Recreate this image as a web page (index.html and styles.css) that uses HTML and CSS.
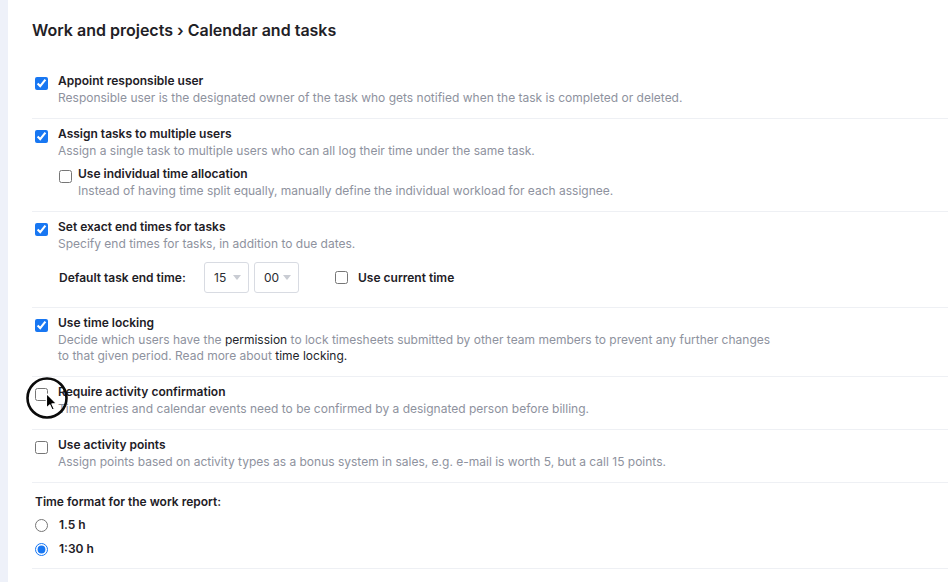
FILE: index.html
```html
<!DOCTYPE html>
<html lang="en">
<head>
<meta charset="utf-8">
<title>Calendar and tasks</title>
<link rel="stylesheet" href="styles.css">
</head>
<body>
<div class="layout">
  <aside class="rail"></aside>
  <main class="panel">
    <h1 class="crumb">Work and projects › Calendar and tasks</h1>

    <section class="row">
      <label class="opt">
        <input type="checkbox" checked>
        <span class="txt"><span class="ttl">Appoint responsible user</span>
        <span class="desc">Responsible user is the designated owner of the task who gets notified when the task is completed or deleted.</span></span>
      </label>
    </section>

    <section class="row">
      <label class="opt">
        <input type="checkbox" checked>
        <span class="txt"><span class="ttl">Assign tasks to multiple users</span>
        <span class="desc">Assign a single task to multiple users who can all log their time under the same task.</span></span>
      </label>
      <label class="opt sub">
        <input type="checkbox">
        <span class="txt"><span class="ttl">Use individual time allocation</span>
        <span class="desc">Instead of having time split equally, manually define the individual workload for each assignee.</span></span>
      </label>
    </section>

    <section class="row">
      <label class="opt">
        <input type="checkbox" checked>
        <span class="txt"><span class="ttl">Set exact end times for tasks</span>
        <span class="desc">Specify end times for tasks, in addition to due dates.</span></span>
      </label>
      <div class="timerow">
        <span class="tlabel">Default task end time:</span>
        <div class="selects">
          <div class="sel"><span>15</span><span class="caret"></span></div>
          <div class="sel"><span>00</span><span class="caret"></span></div>
        </div>
        <label class="inline">
          <input type="checkbox">
          <span class="ttl">Use current time</span>
        </label>
      </div>
    </section>

    <section class="row">
      <label class="opt">
        <input type="checkbox" checked>
        <span class="txt"><span class="ttl">Use time locking</span>
        <span class="desc narrow">Decide which users have the <a class="lnk">permission</a> to lock timesheets submitted by other team members to prevent any further changes to that given period. Read more about <a class="lnk">time locking.</a></span></span>
      </label>
    </section>

    <section class="row">
      <label class="opt">
        <input type="checkbox">
        <span class="txt"><span class="ttl">Require activity confirmation</span>
        <span class="desc">Time entries and calendar events need to be confirmed by a designated person before billing.</span></span>
      </label>
    </section>

    <section class="row">
      <label class="opt">
        <input type="checkbox">
        <span class="txt"><span class="ttl">Use activity points</span>
        <span class="desc">Assign points based on activity types as a bonus system in sales, e.g. e-mail is worth 5, but a call 15 points.</span></span>
      </label>
    </section>

    <section class="row fmt">
      <div class="ttl flabel">Time format for the work report:</div>
      <label class="radio"><input type="radio" name="fmt"><span class="ttl">1.5 h</span></label>
      <label class="radio"><input type="radio" name="fmt" checked><span class="ttl">1:30 h</span></label>
    </section>
  </main>
</div>

<svg class="cursor" width="48" height="48" viewBox="0 0 48 48" aria-hidden="true">
  <circle cx="23" cy="22" r="19.5" fill="none" stroke="#0a0a0a" stroke-width="2.6"/>
  <path d="M22.5 17.5 L22.5 32 L25.8 28.8 L28.2 34 L30.3 33 L27.9 27.9 L32.4 27.6 Z" fill="#000" stroke="#fff" stroke-width="1.1" stroke-linejoin="round"/>
</svg>
</body>
</html>
```

FILE: styles.css
```css
* { box-sizing: border-box; }
html, body { margin: 0; padding: 0; background: #fff; }
body {
  font-family: Inter, "Noto Sans", "Liberation Sans", sans-serif;
  font-size: 12px;
  color: #1e2026;
  -webkit-font-smoothing: antialiased;
}
.layout { display: flex; min-height: 582px; }
.rail { width: 8px; flex: none; background: #eef1f9; }
.panel { flex: 1; padding: 18px 0 0 24px; }

.crumb {
  margin: 0 0 24px 0;
  font-size: 16px;
  line-height: 24px;
  font-weight: 600;
  color: #1f2126;
}

.row {
  padding: 7px 0 12px 0;
  border-bottom: 1px solid #eef0f4;
}

.opt { display: flex; align-items: flex-start; cursor: pointer; }
.opt input[type=checkbox] {
  margin: 4px 10px 0 3px;
  width: 13px; height: 13px; flex: none;
  accent-color: #1877f2;
}
.opt.sub { margin: 7px 0 0 24px; }
.opt.sub input[type=checkbox] { margin-right: 6px; }

.txt { display: flex; flex-direction: column; }
.ttl {
  font-weight: 600;
  line-height: 16px;
  color: #1e2026;
}
.desc {
  margin-top: 1px;
  line-height: 16px;
  color: #8e929e;
}
.desc.narrow { max-width: 720px; }
.lnk { color: #23252b; text-decoration: none; }

.timerow {
  display: flex;
  align-items: center;
  margin: 10px 0 2px 27px;
  height: 31px;
}
.tlabel { font-weight: 600; width: 145px; flex: none; color: #1e2026; }
.selects { display: flex; gap: 5px; }
.sel {
  width: 45px; height: 31px;
  border: 1px solid #d8dbe2;
  border-radius: 3px;
  display: flex; align-items: center; justify-content: space-between;
  padding: 0 7px 0 9px;
  color: #2a2c31;
}
.caret {
  width: 0; height: 0;
  border-left: 4px solid transparent;
  border-right: 4px solid transparent;
  border-top: 5px solid #c9ccd3;
}
.inline { display: flex; align-items: center; margin-left: 36px; cursor: pointer; }
.inline input { margin: 0 10px 0 0; width: 13px; height: 13px; }

.fmt { padding: 11px 0 7px 0; }
.flabel { margin-left: 3px; }
.radio {
  display: flex; align-items: center;
  height: 24px;
  cursor: pointer;
}
.radio:first-of-type { margin-top: 3px; }
.radio input {
  margin: 0 11px 0 3px;
  width: 13px; height: 13px;
  accent-color: #1877f2;
}

.cursor { position: absolute; left: 24px; top: 376px; pointer-events: none; }
```
